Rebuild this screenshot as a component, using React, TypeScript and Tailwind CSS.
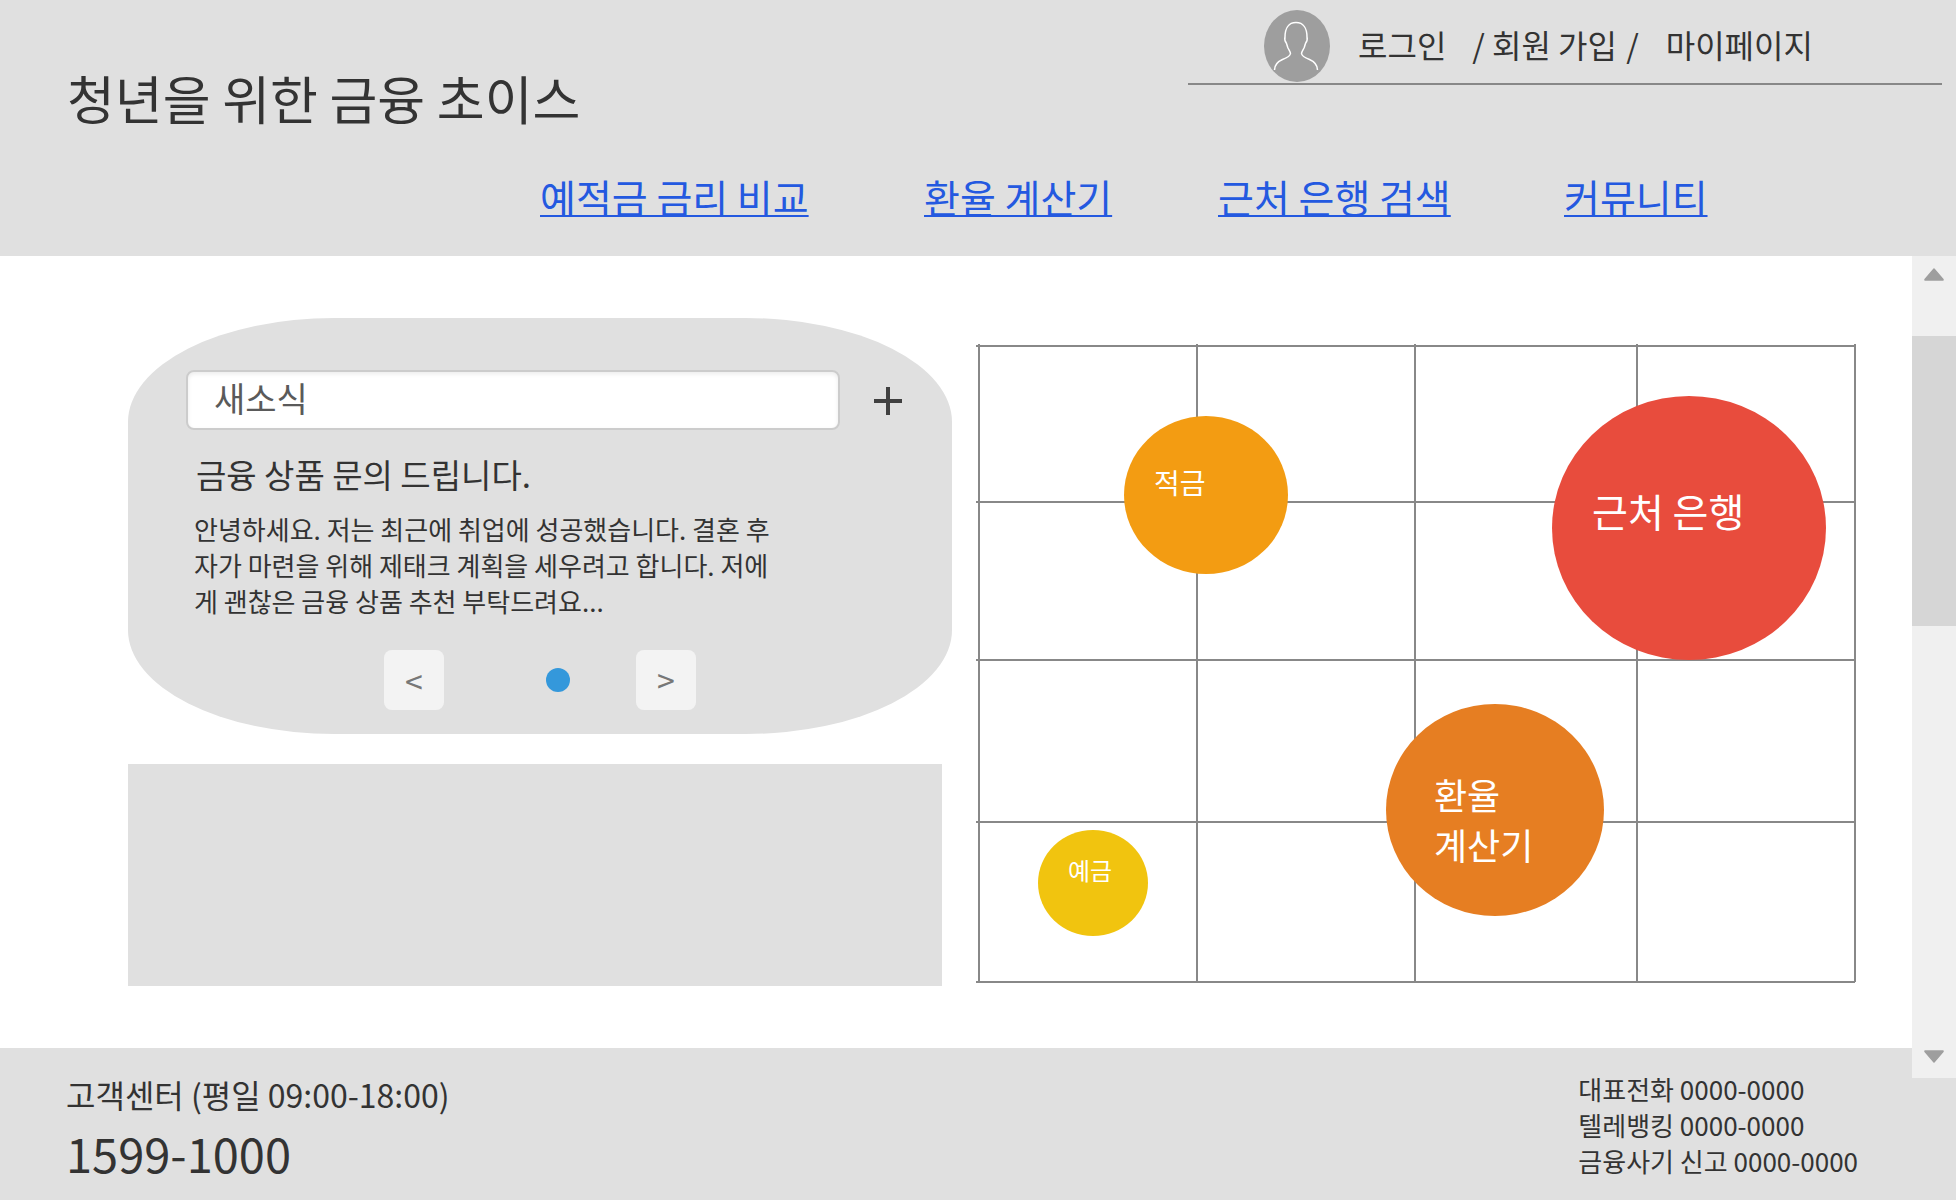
const menu = ['예적금 금리 비교', '환율 계산기', '근처 은행 검색', '커뮤니티'];

const columns = [3, 221, 439, 661, 879];
const rows = [2, 158, 316, 478, 638];

function Avatar() {
  return (
    <svg viewBox="0 0 66 72" className="h-[72px] w-[66px] shrink-0" aria-hidden="true">
      <ellipse cx="33" cy="36" rx="33" ry="36" fill="#9e9e9e" />
      <path
        d="M10.500 60c0-6 3.500-8.500 8-10.500 4-1.500 7.500-3 8-6 .1-1.500-1.500-3.500-2.500-5.500-.8-2-1-3.500-1.700-5-1.300-1.500-1.800-4-1.300-6 0-8.500 3.500-14.500 11-14.500S43 18.500 43 27c.5 2 0 4.500-1.300 6-.7 1.500-.9 3-1.700 5-1 2-2.600 4-2.500 5.500.5 3 4 4.500 8 6 4.500 2 8 4.500 8 10.500"
        fill="none"
        stroke="#fff"
        strokeWidth="1.500"
      />
    </svg>
  );
}

function Header() {
  return (
    <header className="h-64 bg-[#e0e0e0]">
      <div className="flex items-start justify-between">
        <h1 className="mt-[62px] pl-[67px] text-[52px] leading-[72px]">청년을 위한 금융 초이스</h1>
        <nav
          aria-label="회원"
          className="mr-[14px] flex h-[85px] w-[754px] items-center border-b-2 border-[#888] pt-2 pl-[76px] text-[32px] leading-[48px] whitespace-pre"
        >
          <Avatar />
          <div className="flex pb-1 pl-7">
            <a href="#login">로그인</a>
            <span className="ml-[26px]">/ </span>
            <a href="#join">회원 가입</a>
            <span className="ml-[2px]"> /</span>
            <a href="#mypage" className="ml-[27px]">마이페이지</a>
          </div>
        </nav>
      </div>
      <nav
        aria-label="주 메뉴"
        className="mt-[34px] grid grid-cols-[384fr_294fr_346fr_145fr] pr-[247px] pl-[540px] text-[39px] leading-[56px] whitespace-nowrap text-[#2459e0]"
      >
        {menu.map((item) => (
          <a key={item} href="#menu" className="justify-self-start underline decoration-2 underline-offset-2 [text-decoration-skip-ink:none]">
            {item}
          </a>
        ))}
      </nav>
    </header>
  );
}

function NewsCard() {
  return (
    <section className="rounded-[25%] bg-[#e0e0e0] pt-[52px] pb-6">
      <div className="flex items-center pr-[50px] pl-[58px]">
        <input
          aria-label="새소식"
          defaultValue="새소식"
          className="h-[60px] min-w-0 flex-1 rounded-lg border-2 border-[#ccc] bg-white px-[26px] pb-1.5 text-[34px] text-[#5a5a5a] shadow-[inset_0_2px_4px_rgba(0,0,0,0.08)] outline-none"
        />
        <button type="button" aria-label="더하기" className="ml-[34px] pt-[2px]">
          <svg viewBox="0 0 28 28" className="size-7" aria-hidden="true">
            <path d="M14 0v28M0 14h28" stroke="#404040" strokeWidth="4" />
          </svg>
        </button>
      </div>
      <h2 className="mt-[22px] pl-[68px] text-[33px] leading-[44px]">금융 상품 문의 드립니다.</h2>
      <p className="mt-[15px] ml-[66px] w-[590px] text-[26px] leading-9 break-all">
        안녕하세요. 저는 최근에 취업에 성공했습니다. 결혼 후 자가 마련을 위해 제태크 계획을 세우려고 합니다. 저에게 괜찮은 금융 상품 추천 부탁드려요...
      </p>
      <div className="mt-[31px] flex items-center pl-64 text-[32px] leading-[56px] text-[#777]">
        <button type="button" aria-label="이전" className="size-[60px] rounded-lg bg-[#f3f3f3]">&lt;</button>
        <button type="button" aria-label="첫 번째 소식" className="ml-[102px] size-6 rounded-full bg-[#3498db]" />
        <button type="button" aria-label="다음" className="ml-[66px] size-[60px] rounded-lg bg-[#f3f3f3] pb-[2px]">&gt;</button>
      </div>
    </section>
  );
}

function BubbleChart() {
  return (
    <section aria-label="서비스 바로가기" className="relative h-[639px] text-white">
      <svg viewBox="0 0 881 639" preserveAspectRatio="none" className="size-full" aria-hidden="true">
        <g stroke="#888" strokeWidth="2">
          {columns.map((x) => (
            <line key={x} x1={x} x2={x} y1="0" y2="638" vectorEffect="non-scaling-stroke" />
          ))}
          {rows.map((y) => (
            <line key={y} x1="0" x2="879" y1={y} y2={y} vectorEffect="non-scaling-stroke" />
          ))}
        </g>
      </svg>
      <a href="#savings" className="absolute top-[72px] left-[calc(148/881*100%)] h-[158px] w-[164px] rounded-[50%] bg-[#f39c12] pt-[46px] pl-[30px] text-[28px] leading-10">
        적금
      </a>
      <a href="#bank" className="absolute top-[52px] left-[calc(576/881*100%)] h-[264px] w-[274px] rounded-[50%] bg-[#e84c3d] pt-[86px] pl-10 text-[39px] leading-[56px]">
        근처 은행
      </a>
      <a href="#exchange" className="absolute top-[360px] left-[calc(410/881*100%)] h-[212px] w-[218px] rounded-[50%] bg-[#e67e22] pt-[65px] pl-12 text-[36px] leading-[50px]">
        환율
        <br />
        계산기
      </a>
      <a href="#deposit" className="absolute top-[486px] left-[calc(62/881*100%)] h-[106px] w-[110px] rounded-[50%] bg-[#f1c40f] pt-[22px] pl-[30px] text-[24px] leading-9">
        예금
      </a>
    </section>
  );
}

function ScrollRail() {
  return (
    <aside className="relative z-10 -mb-[30px] flex w-11 shrink-0 flex-col items-center bg-[#f0f0f0] pt-3 pb-[15px]">
      <button type="button" aria-label="위로">
        <svg viewBox="0 0 20 13" className="h-[13px] w-5" aria-hidden="true">
          <path d="M10 1 19 11.500v.5H1v-.5Z" fill="#9e9e9e" stroke="#9e9e9e" strokeWidth="1.500" strokeLinejoin="round" />
        </svg>
      </button>
      <div className="mt-[55px] h-[290px] w-full bg-[#d6d6d6]" />
      <button type="button" aria-label="아래로" className="mt-auto">
        <svg viewBox="0 0 20 13" className="h-[13px] w-5" aria-hidden="true">
          <path d="M10 12 19 1.500V1H1v.5Z" fill="#9e9e9e" stroke="#9e9e9e" strokeWidth="1.500" strokeLinejoin="round" />
        </svg>
      </button>
    </aside>
  );
}

function Footer() {
  return (
    <footer className="flex grow items-start justify-between bg-[#e0e0e0] pr-[98px] pl-[66px]">
      <div className="pt-[22px]">
        <p className="text-[32px] leading-[48px]">고객센터 (평일 09:00-18:00)</p>
        <p className="text-[47px] leading-[70px]">1599-1000</p>
      </div>
      <address className="pt-[23px] text-[26px] leading-9 not-italic">
        <p>대표전화 0000-0000</p>
        <p>텔레뱅킹 0000-0000</p>
        <p>금융사기 신고 0000-0000</p>
      </address>
    </footer>
  );
}

export default function App() {
  return (
    <div className="flex min-h-screen flex-col bg-white font-['Noto_Sans_CJK_KR',sans-serif] text-[#333]">
      <Header />
      <div className="flex">
        <main className="flex min-w-0 flex-1 gap-6 pt-[62px] pr-[55px] pb-[62px] pl-32">
          <div className="min-w-0 flex-[824]">
            <NewsCard />
            <div className="mt-[30px] mr-[10px] h-[222px] bg-[#e0e0e0]" />
          </div>
          <div className="min-w-0 flex-[881] pt-[26px]">
            <BubbleChart />
          </div>
        </main>
        <ScrollRail />
      </div>
      <Footer />
    </div>
  );
}
